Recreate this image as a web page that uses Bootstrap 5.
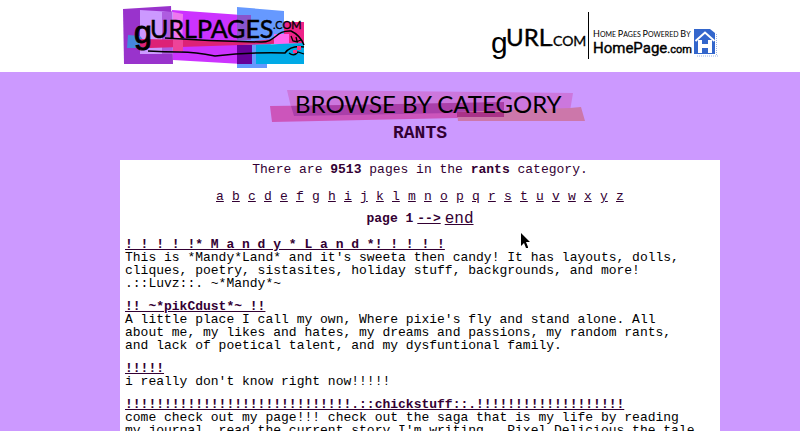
<!DOCTYPE html>
<html lang="en">
<head>
<meta charset="utf-8">
<meta name="viewport" content="width=device-width, initial-scale=1">
<title>gURLpages - Browse by category: rants</title>
<link href="https://cdn.jsdelivr.net/npm/bootstrap@5.3.0/dist/css/bootstrap.min.css" rel="stylesheet">
<style>
body { background: #cc99ff; color: #000; font: 13px/13px "Liberation Mono", "Courier New", monospace; }
.shifted { padding-left: 40px; }
.page-col { max-width: 600px; }
a { color: #330033; }
a:hover { color: #990099; }
.plum { color: #330033; }
.site-head { min-height: 72px; }
.site-head svg, .banner svg, .pointer svg { display: block; }
.hand { font-family: Lato, sans-serif; }
.round { font-family: "Liberation Sans", Arial, sans-serif; }
.brand { font-family: Roboto, sans-serif; }
.banner { padding: 17px 0 0 16px; }
.category { font-size: 18px; line-height: 20px; padding-bottom: 17px; }
.panel { padding: 3px 5px; }
.letters { gap: 8px; padding: 14px 0 9px; }
.letters a { width: 8px; }
.pager { gap: 4px; padding-bottom: 12px; line-height: 14px; }
.pager-end { font-size: 16px; }
.entry { margin-bottom: 10px; padding-right: 16px; }
.pointer { left: 400px; top: 161px; pointer-events: none; }
</style>
</head>
<body>
<header class="site-head shifted bg-white">
  <div class="page-col mx-auto d-flex justify-content-between">
    <a href="#" aria-label="gURLpages.com">
      <svg width="190" height="72" viewBox="0 0 190 72">
        <path fill="#9933cc" d="M3 9 51 6 53 64 4 64z"/>
        <path fill="#cc33ff" d="M52 10 122 15 122 64 53 60z"/>
        <path fill="#cc99ff" d="M20 10 53 12 53 54 20 54z"/>
        <path fill="#9933cc" d="M42 12 52 11 53 64 42 64z" opacity=".6"/>
        <path fill="#ee77ee" d="M53 12 63 14 62 52 53 52z"/>
        <path fill="#6699ff" d="M117 7 164 11 164 36 147 47 147 68 117 68z"/>
        <path fill="#8855cc" d="M117 15 131 15 131 40 117 40z"/>
        <path fill="#4488dd" d="M8 35 20 36 30 48 7 48z"/>
        <path fill="#dd2277" d="M20 39 133 41 175 37 183 43 30 48 20 47z"/>
        <path fill="#ee4499" d="M53 40h10v11H53z"/>
        <path fill="#ee2288" d="M164 22 184 22 184 44 164 43z"/>
        <path fill="#ff66ee" d="M154 34h15v10h-15z"/>
        <path fill="#00aae6" d="M132 45 184 43 184 64 136 64 136 45z"/>
        <path fill="#660099" d="M117 45h15v19h-15z"/>
        <text class="round" x="14" y="43" font-size="32" stroke="#000" stroke-width="1">g</text>
        <text class="hand" x="30" y="38" font-size="25" stroke="#000" stroke-width=".5">URLPAGES</text>
        <text class="hand" x="153" y="29" font-size="11" stroke="#000" stroke-width=".3">.COM</text>
        <path fill="none" stroke="#000" stroke-width="1.500" d="M45 38Q90 41 140 42C156 43 155 30 171 31Q180 35 184 45M28 51Q45 52 60 52T95 56Q130 52 165 53Q171 45 184 47"/>
        <path fill="none" stroke="#000" stroke-width="1.300" d="M171 36l2 5 5 1M176 37l1 4M181 40l-5 2M169 53q5 4 9-1l6 2"/>
        <path fill="#ff3388" d="M177 46h4v4h-4zM173 50h4v3h-4z"/>
      </svg>
    </a>
    <a href="#" aria-label="gURL.com, home pages powered by HomePage.com">
      <svg width="230" height="72" viewBox="0 0 230 72">
        <text class="round" x="1" y="53" font-size="30">g</text>
        <text class="hand" x="16" y="46" font-size="24" stroke="#000" stroke-width=".4">URL</text>
        <text class="hand" x="60" y="46" font-size="14" stroke="#000" stroke-width=".3">.COM</text>
        <path stroke="#000" d="M98.500 12v47"/>
        <text class="hand" x="103" y="37" font-size="9">H<tspan font-size="7">OME </tspan>P<tspan font-size="7">AGES </tspan>P<tspan font-size="7">OWERED </tspan>B<tspan font-size="7">Y</tspan></text>
        <text class="brand" x="103" y="53" font-size="15" stroke="#000" stroke-width=".4">HomePage<tspan font-size="11">.com</tspan></text>
        <path fill="#3366cc" d="M204 29h16l5 4v21h-21z"/>
        <path stroke="#99b2e6" stroke-dasharray="1 1" d="M207 56h21M226.500 34v22"/>
        <path fill="none" stroke="#fff" stroke-width="2" d="M205.500 41 215 32.500 224.500 41"/>
        <path fill="#fff" d="M208 40h4v4h6v-4h4v13h-4v-5h-6v5h-4z"/>
      </svg>
    </a>
  </div>
</header>
<div class="shifted">
<main class="page-col mx-auto position-relative">
  <h1 class="banner m-0 d-flex justify-content-center">
    <svg width="316" height="34" viewBox="0 0 316 34" role="img" aria-label="Browse by category">
      <path fill="#cc77dd" d="M17 1 303 4 300 22 23 27z"/>
      <path fill="#cc55bb" d="M0 17 234 14 234 28 2 33z"/>
      <path fill="#aa3fa9" d="M21 17 234 13 234 23 24 27z"/>
      <path fill="#cc77aa" d="M187 23 300 19 311 18 315 32 188 32z"/>
      <path fill="#aa3388" d="M187 23h47v5h-47z"/>
      <text class="hand" x="25" y="24" font-size="24" font-weight="400">BROWSE BY CATEGORY</text>
    </svg>
  </h1>
  <h2 class="category plum fw-bold text-center m-0">RANTS</h2>
  <section class="panel bg-white">
    <p class="plum text-center m-0">There are <b>9513</b> pages in the <b>rants</b> category.</p>
    <nav class="letters d-flex justify-content-center" aria-label="Pages by letter">
      <a href="#">a</a><a href="#">b</a><a href="#">c</a><a href="#">d</a><a href="#">e</a><a href="#">f</a><a href="#">g</a><a href="#">h</a><a href="#">i</a><a href="#">j</a><a href="#">k</a><a href="#">l</a><a href="#">m</a><a href="#">n</a><a href="#">o</a><a href="#">p</a><a href="#">q</a><a href="#">r</a><a href="#">s</a><a href="#">t</a><a href="#">u</a><a href="#">v</a><a href="#">w</a><a href="#">x</a><a href="#">y</a><a href="#">z</a>
    </nav>
    <nav class="pager plum d-flex justify-content-center" aria-label="Pages"><b>page 1</b><a class="fw-bold" href="#">--&gt;</a><a class="pager-end" href="#">end</a></nav>
    <article class="entry">
      <a class="fw-bold" href="#">! ! ! ! !* M a n d y * L a n d *! ! ! ! !</a>
      <p class="m-0">This is *Mandy*Land* and it's sweeta then candy! It has layouts, dolls, cliques, poetry, sistasites, holiday stuff, backgrounds, and more! .::Luvz::. ~*Mandy*~</p>
    </article>
    <article class="entry">
      <a class="fw-bold" href="#">!! ~*pikCdust*~ !!</a>
      <p class="m-0">A little place I call my own, Where pixie's fly and stand alone. All about me, my likes and hates, my dreams and passions, my random rants, and lack of poetical talent, and my dysfuntional family.</p>
    </article>
    <article class="entry">
      <a class="fw-bold" href="#">!!!!!</a>
      <p class="m-0">i really don't know right now!!!!!</p>
    </article>
    <article class="entry">
      <a class="fw-bold" href="#">!!!!!!!!!!!!!!!!!!!!!!!!!!!!!.::chickstuff::.!!!!!!!!!!!!!!!!!!!</a>
      <p class="m-0">come check out my page!!! check out the saga that is my life by reading my journal, read the current story I'm writing.&nbsp; Pixel Delicious the tale</p>
    </article>
  </section>
  <div class="pointer position-absolute" aria-hidden="true">
    <svg width="12" height="18" viewBox="0 0 12 18"><path d="M1 0v13l3-3 2 5h2v-1l-2-5h4z"/></svg>
  </div>
</main>
</div>
<script src="https://cdn.jsdelivr.net/npm/bootstrap@5.3.0/dist/js/bootstrap.bundle.min.js"></script>
</body>
</html>
